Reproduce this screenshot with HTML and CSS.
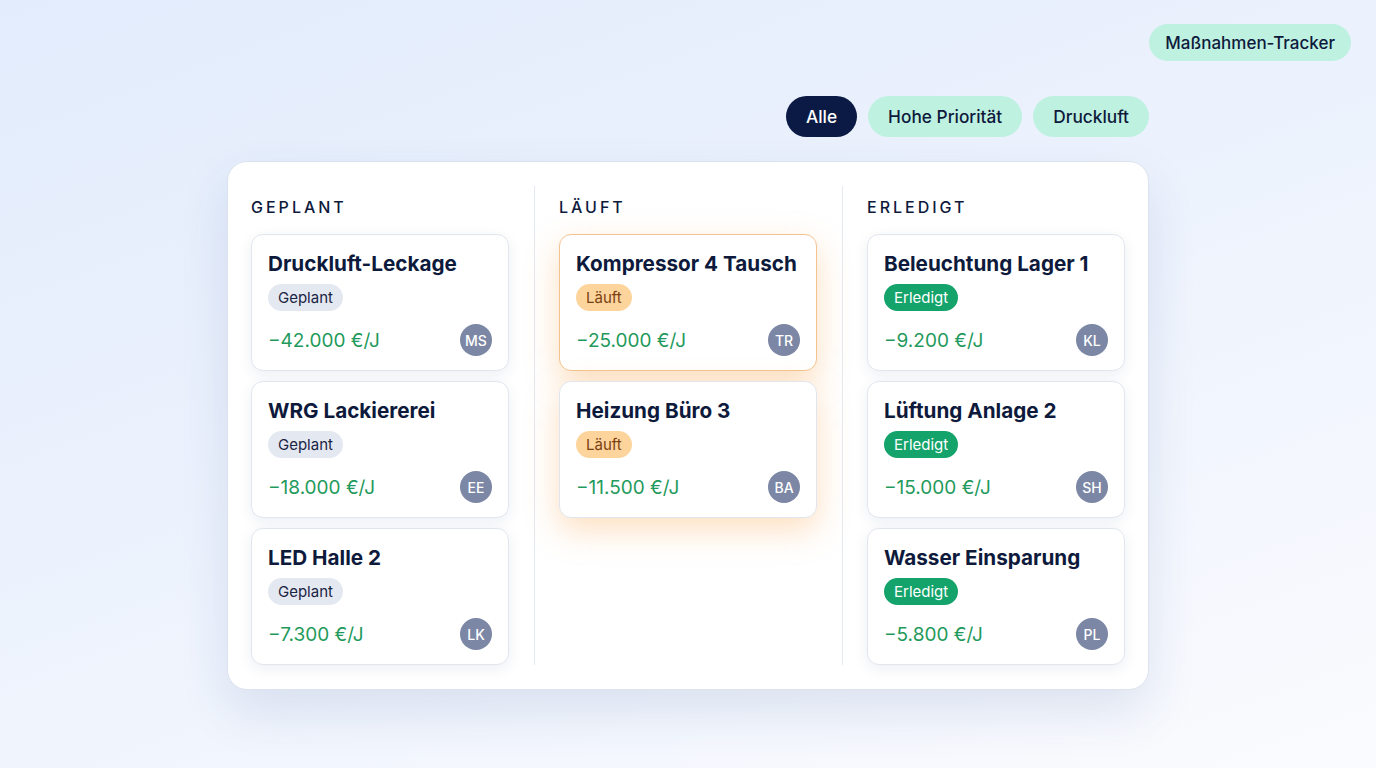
FILE: index.html
```html
<!DOCTYPE html>
<html lang="de">
<head>
<meta charset="utf-8">
<title>Maßnahmen-Tracker</title>
<link rel="stylesheet" href="styles.css">
</head>
<body>
<header class="topbar">
  <span class="tracker-pill">Maßnahmen-Tracker</span>
</header>
<main class="wrap">
  <nav class="filters">
    <button class="filter active">Alle</button>
    <button class="filter">Hohe Priorität</button>
    <button class="filter">Druckluft</button>
  </nav>
  <section class="board">
    <div class="column">
      <h2 class="col-title">GEPLANT</h2>
      <div class="cards">
        <article class="card">
          <h3 class="card-title">Druckluft-Leckage</h3>
          <span class="badge planned">Geplant</span>
          <div class="card-foot"><span class="amount">−42.000 €/J</span><span class="avatar">MS</span></div>
        </article>
        <article class="card">
          <h3 class="card-title">WRG Lackiererei</h3>
          <span class="badge planned">Geplant</span>
          <div class="card-foot"><span class="amount">−18.000 €/J</span><span class="avatar">EE</span></div>
        </article>
        <article class="card">
          <h3 class="card-title">LED Halle 2</h3>
          <span class="badge planned">Geplant</span>
          <div class="card-foot"><span class="amount">−7.300 €/J</span><span class="avatar">LK</span></div>
        </article>
      </div>
    </div>
    <div class="divider"></div>
    <div class="column">
      <h2 class="col-title">LÄUFT</h2>
      <div class="cards">
        <article class="card running focus">
          <h3 class="card-title">Kompressor 4 Tausch</h3>
          <span class="badge run">Läuft</span>
          <div class="card-foot"><span class="amount">−25.000 €/J</span><span class="avatar">TR</span></div>
        </article>
        <article class="card running">
          <h3 class="card-title">Heizung Büro 3</h3>
          <span class="badge run">Läuft</span>
          <div class="card-foot"><span class="amount">−11.500 €/J</span><span class="avatar">BA</span></div>
        </article>
      </div>
    </div>
    <div class="divider"></div>
    <div class="column">
      <h2 class="col-title">ERLEDIGT</h2>
      <div class="cards">
        <article class="card">
          <h3 class="card-title">Beleuchtung Lager 1</h3>
          <span class="badge done">Erledigt</span>
          <div class="card-foot"><span class="amount">−9.200 €/J</span><span class="avatar">KL</span></div>
        </article>
        <article class="card">
          <h3 class="card-title">Lüftung Anlage 2</h3>
          <span class="badge done">Erledigt</span>
          <div class="card-foot"><span class="amount">−15.000 €/J</span><span class="avatar">SH</span></div>
        </article>
        <article class="card">
          <h3 class="card-title">Wasser Einsparung</h3>
          <span class="badge done">Erledigt</span>
          <div class="card-foot"><span class="amount">−5.800 €/J</span><span class="avatar">PL</span></div>
        </article>
      </div>
    </div>
  </section>
</main>
</body>
</html>
```

FILE: styles.css
```css
* { box-sizing: border-box; }
html, body { height: 100%; }
body {
  margin: 0;
  min-height: 768px;
  font-family: Inter, "Noto Sans", "Liberation Sans", sans-serif;
  color: #0e1a3c;
  background: linear-gradient(160deg, #e2ecfc 0%, #ecf2fd 45%, #fafbfe 100%);
  overflow: hidden;
}
.topbar {
  display: flex;
  justify-content: flex-end;
  padding: 24px 25px 0 0;
}
.tracker-pill {
  display: inline-flex;
  align-items: center;
  height: 37px;
  padding: 0 16px;
  border-radius: 999px;
  background: #bff1e1;
  font-size: 17px;
  font-weight: 500;
  color: #0e1a3c;
}
.wrap {
  width: 922px;
  margin: 0 auto;
}
.filters {
  display: flex;
  justify-content: flex-end;
  gap: 11px;
  margin-top: 35px;
}
.filter {
  height: 41px;
  padding: 0 20px;
  border: none;
  border-radius: 999px;
  background: #bff1e1;
  font-family: inherit;
  font-size: 17.3px;
  font-weight: 500;
  color: #0e1a3c;
}
.filter.active {
  background: #0b1a45;
  color: #ffffff;
}
.board {
  display: flex;
  margin-top: 24px;
  padding: 24px 23px;
  background: #ffffff;
  border: 1px solid #dce3ee;
  border-radius: 20px;
  box-shadow: 0 22px 50px rgba(40, 70, 140, 0.12);
}
.column {
  width: 258px;
  flex: none;
}
.divider {
  width: 1px;
  flex: none;
  margin: 0 24px 0 25px;
  background: #e4e8ef;
}
.col-title {
  margin: 11px 0 17px;
  height: 20px;
  font-size: 16px;
  line-height: 20px;
  font-weight: 500;
  letter-spacing: 3px;
  color: #0e1a3c;
}
.cards {
  display: flex;
  flex-direction: column;
  gap: 10px;
}
.card {
  height: 137px;
  padding: 16px 16px 14px;
  background: #ffffff;
  border: 1px solid #e1e6ee;
  border-radius: 12px;
  box-shadow: 0 4px 14px rgba(30, 50, 110, 0.08);
  display: flex;
  flex-direction: column;
  align-items: flex-start;
}
.card.running {
  box-shadow: 0 12px 32px rgba(250, 160, 70, 0.34);
}
.card.focus {
  border-color: #f2c38e;
}
.card-title {
  margin: 0;
  font-size: 20.7px;
  line-height: 26px;
  font-weight: 700;
  color: #0e1a3c;
}
.badge {
  margin-top: 7px;
  height: 27px;
  padding: 0 10px;
  border-radius: 999px;
  display: inline-flex;
  align-items: center;
  font-size: 15px;
  font-weight: 400;
}
.badge.planned { background: #e4e8f0; color: #1a2444; }
.badge.run { background: #fcd49c; color: #7b3f10; }
.badge.done { background: #14a36a; color: #ffffff; }
.card-foot {
  margin-top: auto;
  width: 100%;
  display: flex;
  align-items: center;
  justify-content: space-between;
}
.amount {
  font-size: 19px;
  color: #1f9a5c;
}
.avatar {
  width: 32px;
  height: 32px;
  border-radius: 50%;
  background: #7c87a5;
  color: #ffffff;
  font-size: 14px;
  font-weight: 500;
  display: flex;
  align-items: center;
  justify-content: center;
}
```
